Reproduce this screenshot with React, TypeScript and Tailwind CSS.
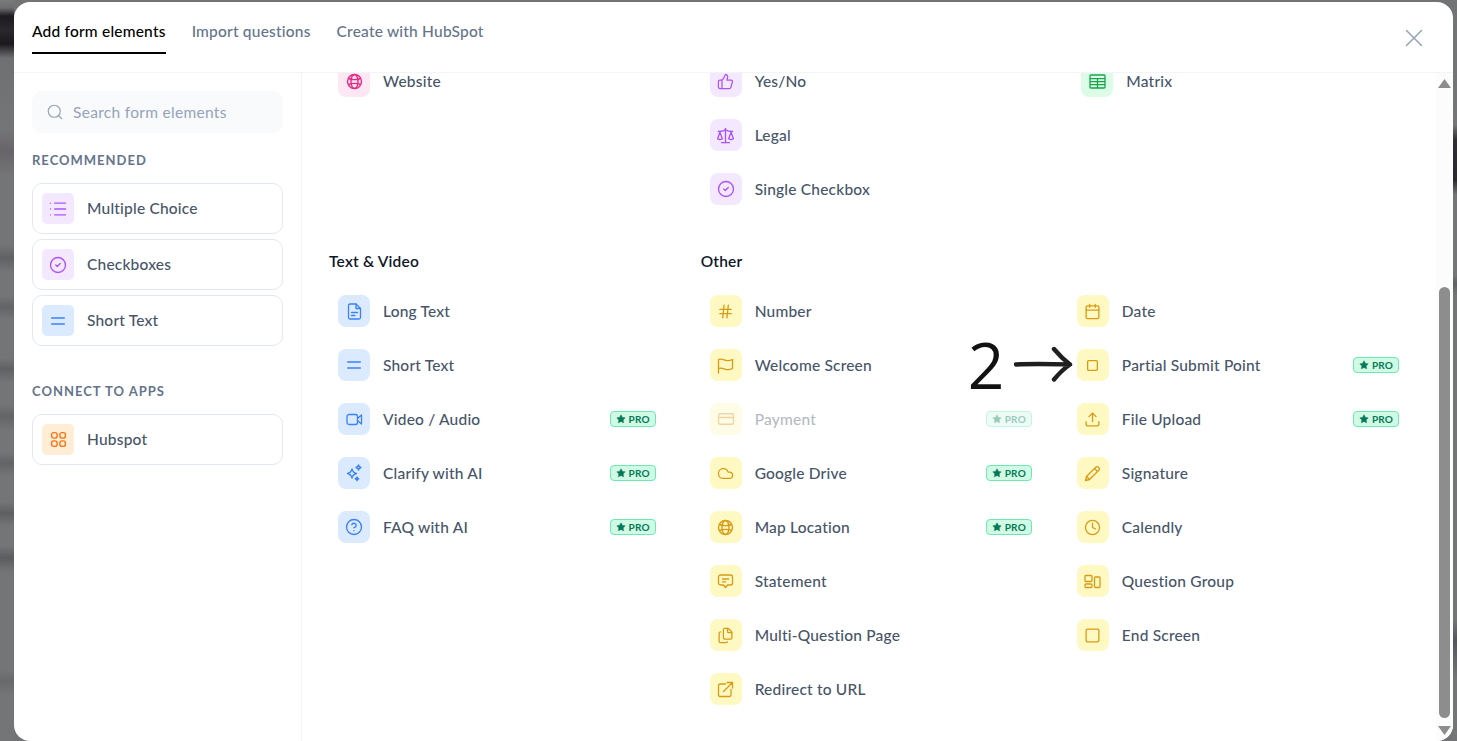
import { ReactNode } from "react";
import {
  Calendar,
  CircleCheck,
  CircleHelp,
  Clock,
  Cloud,
  CreditCard,
  Files,
  Hash,
  List,
  Scale,
  Search,
  Square,
  Star,
  ThumbsUp,
  Upload,
  X,
} from "lucide-react";

type Tone = "purple" | "blue" | "yellow" | "pink" | "green" | "orange";

const toneClass: Record<Tone, string> = {
  purple: "bg-[#f3e8ff] text-[#a855f7]",
  blue: "bg-[#dbeafe] text-[#3b82f6]",
  yellow: "bg-[#fef8c2] text-[#d99a14]",
  pink: "bg-[#fce7f3] text-[#e72a83]",
  green: "bg-[#dcfce7] text-[#16a34a]",
  orange: "bg-[#ffedd5] text-[#f97316]",
};

const HubspotIcon = () => (
  <svg width="17" height="17" viewBox="0 0 16 16" fill="none" stroke="currentColor" strokeWidth="1.3">
    <rect x="1.5" y="1.5" width="5.2" height="5.2" rx="2" />
    <rect x="9.3" y="1.5" width="5.2" height="5.2" rx="2" />
    <rect x="1.5" y="9.3" width="5.2" height="5.2" rx="2" />
    <rect x="9.3" y="9.3" width="5.2" height="5.2" rx="2" />
  </svg>
);

const MatrixIcon = () => (
  <svg width="17" height="15" viewBox="0 0 17 15" fill="none" stroke="currentColor" strokeWidth="1.3">
    <rect x="1" y="1" width="15" height="13" rx="1" />
    <path d="M1 4.600h15M1 7.600h15M1 10.600h15M8.500 4.600V14" />
  </svg>
);

const MessageIcon = () => (
  <svg width="17" height="17" viewBox="0 0 17 17" fill="none" stroke="currentColor" strokeWidth="1.3" strokeLinejoin="round">
    <path d="M3.500 2h10A2 2 0 0 1 15.500 4v6a2 2 0 0 1-2 2h-3l-2 2.500-2-2.500h-3a2 2 0 0 1-2-2V4a2 2 0 0 1 2-2Z" />
    <path d="M5 6h7M5 8.800h4" />
  </svg>
);

const GroupIcon = () => (
  <svg width="17" height="15" viewBox="0 0 17 15" fill="none" stroke="currentColor" strokeWidth="1.3">
    <rect x="1" y="1.500" width="7" height="6" rx="1" />
    <rect x="1" y="10" width="7" height="3.500" rx="1" />
    <rect x="10.500" y="3" width="5.500" height="10.500" rx="1" />
  </svg>
);

const WorldIcon = () => (
  <svg width="17" height="17" viewBox="0 0 17 17" fill="none" stroke="currentColor" strokeWidth="1.4">
    <circle cx="8.500" cy="8.500" r="7" />
    <ellipse cx="8.500" cy="8.500" rx="3.500" ry="7" />
    <path d="M2.300 5.500c3.500 1.300 8.900 1.300 12.400 0M2.300 11.500c3.500-1.300 8.900-1.300 12.400 0" />
  </svg>
);

const EqualIcon = () => (
  <svg width="14" height="8" viewBox="0 0 14 8" fill="none" stroke="currentColor" strokeWidth="1.4" strokeLinecap="round">
    <path d="M.7 1h12.600M.7 7h12.600" />
  </svg>
);

const SparkIcon = () => (
  <svg width="18" height="18" viewBox="0 0 18 18" fill="none" stroke="currentColor" strokeWidth="1.3" strokeLinejoin="round">
    <path d="M7 5c.6 2.600 1.900 3.900 4.500 4.500C8.900 10.100 7.600 11.400 7 14c-.6-2.600-1.900-3.900-4.500-4.500C5.100 8.900 6.400 7.600 7 5Z" />
    <path d="M13.500 1c.3 1.500 1 2.200 2.500 2.500-1.500.3-2.200 1-2.500 2.500-.3-1.500-1-2.200-2.500-2.500 1.500-.3 2.200-1 2.500-2.500Z" />
    <path d="M12 13c.2 1 .8 1.600 1.800 1.800-1 .2-1.600.8-1.800 1.800-.2-1-.8-1.600-1.800-1.800 1-.2 1.600-.8 1.800-1.800Z" fill="currentColor" />
  </svg>
);

const VideoIcon = () => (
  <svg width="17" height="13" viewBox="0 0 17 13" fill="none" stroke="currentColor" strokeWidth="1.3" strokeLinejoin="round">
    <rect x="1" y="1.500" width="10.500" height="10" rx="2" />
    <path d="M11.500 5.500 15.500 2v9l-4-3.500" />
  </svg>
);

const DocIcon = () => (
  <svg width="15" height="17" viewBox="0 0 15 17" fill="none" stroke="currentColor" strokeWidth="1.3" strokeLinejoin="round" strokeLinecap="round">
    <path d="M9 1H3a1.500 1.500 0 0 0-1.500 1.500v12A1.500 1.500 0 0 0 3 16h9a1.500 1.500 0 0 0 1.500-1.500V5.500L9 1Z" />
    <path d="M9 1v4.500h4.500M4.500 9.500h6M4.500 12.500h3.500" />
  </svg>
);

const FlagIcon = () => (
  <svg width="17" height="17" viewBox="0 0 17 17" fill="none" stroke="currentColor" strokeWidth="1.3" strokeLinejoin="round" strokeLinecap="round">
    <path d="M1.500 16V2.500c2.500-1.300 5 .2 7 .8 2 .6 4.500.4 7-.8v9c-2.500 1.200-5 1.400-7 .8-2-.6-4.500-2.100-7-.8" />
  </svg>
);

const RedirectIcon = () => (
  <svg width="17" height="17" viewBox="0 0 17 17" fill="none" stroke="currentColor" strokeWidth="1.3" strokeLinejoin="round" strokeLinecap="round">
    <path d="M8.500 3H3a1.500 1.500 0 0 0-1.500 1.500V14A1.500 1.500 0 0 0 3 15.500h9.500A1.500 1.500 0 0 0 14 14V8.500" />
    <path d="M6.500 10.500 15.500 1.500M10 1.500h5.500V7" />
  </svg>
);

const PencilIcon = () => (
  <svg width="17" height="17" viewBox="0 0 17 17" fill="none" stroke="currentColor" strokeWidth="1.3" strokeLinejoin="round">
    <path d="M1.500 15.500l1-4L12 2a1.400 1.400 0 0 1 2 0l1 1a1.400 1.400 0 0 1 0 2l-9.500 9.500-4 1Z" />
    <path d="M10.500 3.500l3 3M2.500 11.500l3 3" />
  </svg>
);

const ic = { size: 17, strokeWidth: 1.8 };

const IconBox = ({ tone, children }: { tone: Tone; children: ReactNode }) => (
  <span className={`flex h-[32px] w-[32px] shrink-0 items-center justify-center rounded-[8px] ${toneClass[tone]}`}>
    {children}
  </span>
);

const ProBadge = () => (
  <span className="ml-auto flex h-[16px] w-[46px] items-center justify-center gap-[3px] rounded-[4px] border border-[#6ee7b7] bg-[#d1fae5] text-[10px] font-bold tracking-[0.2px] text-[#047857]">
    <Star size={10} fill="currentColor" strokeWidth={1} />
    PRO
  </span>
);

type Item = { label: string; tone: Tone; icon: ReactNode; pro?: boolean; muted?: boolean; note?: boolean };

const Row = ({ label, tone, icon, pro, muted, note }: Item) => (
  <div className="relative">
    <div className={`flex h-[54px] items-center gap-[13px] px-[9px] ${muted ? "opacity-40" : ""}`}>
      <IconBox tone={tone}>{icon}</IconBox>
      <span className="text-[15.5px] font-medium leading-[16px] tracking-[0.2px] text-[#475569]">{label}</span>
      {pro && <ProBadge />}
    </div>
    {note && (
      <div className="absolute left-[-100px] top-0 flex h-[54px] items-center">
        <span className="font-['Open_Sans',sans-serif] text-[64px] font-medium leading-none text-[#111]">2</span>
        <svg className="absolute left-[46px] top-[8px]" width="60" height="36" viewBox="0 0 60 36" fill="none" stroke="#1f1f1f" strokeWidth="4.400" strokeLinecap="round" strokeLinejoin="round">
          <path d="M2 18.500c18-1 36-.5 54 0M40 3c5 6 10 11 16 15.500M56 18.500c-6 4-11 9-16 15" />
        </svg>
      </div>
    )}
  </div>
);

const SideCard = ({ label, tone, icon }: { label: string; tone: Tone; icon: ReactNode }) => (
  <div className="flex h-[51px] items-center gap-[13px] rounded-[10px] border border-[#e2e8f0] pl-[9px]">
    <span className={`flex h-[31px] w-[32px] items-center justify-center rounded-[5px] ${toneClass[tone]}`}>{icon}</span>
    <span className="text-[15.5px] font-medium tracking-[0.2px] text-[#475569]">{label}</span>
  </div>
);

const textVideo: Item[] = [
  { label: "Long Text", tone: "blue", icon: <DocIcon /> },
  { label: "Short Text", tone: "blue", icon: <EqualIcon /> },
  { label: "Video / Audio", tone: "blue", icon: <VideoIcon />, pro: true },
  { label: "Clarify with AI", tone: "blue", icon: <SparkIcon />, pro: true },
  { label: "FAQ with AI", tone: "blue", icon: <CircleHelp size={18} strokeWidth={1.8} />, pro: true },
];

const otherLeft: Item[] = [
  { label: "Number", tone: "yellow", icon: <Hash {...ic} /> },
  { label: "Welcome Screen", tone: "yellow", icon: <FlagIcon /> },
  { label: "Payment", tone: "yellow", icon: <CreditCard size={18} strokeWidth={1.8} />, pro: true, muted: true },
  { label: "Google Drive", tone: "yellow", icon: <Cloud {...ic} />, pro: true },
  { label: "Map Location", tone: "yellow", icon: <WorldIcon />, pro: true },
  { label: "Statement", tone: "yellow", icon: <MessageIcon /> },
  { label: "Multi-Question Page", tone: "yellow", icon: <Files {...ic} /> },
  { label: "Redirect to URL", tone: "yellow", icon: <RedirectIcon /> },
];

const otherRight: Item[] = [
  { label: "Date", tone: "yellow", icon: <Calendar {...ic} /> },
  { label: "Partial Submit Point", tone: "yellow", icon: <Square size={13} strokeWidth={2.4} />, pro: true, note: true },
  { label: "File Upload", tone: "yellow", icon: <Upload {...ic} />, pro: true },
  { label: "Signature", tone: "yellow", icon: <PencilIcon /> },
  { label: "Calendly", tone: "yellow", icon: <Clock {...ic} /> },
  { label: "Question Group", tone: "yellow", icon: <GroupIcon /> },
  { label: "End Screen", tone: "yellow", icon: <Square {...ic} /> },
];

export default function App() {
  return (
    <div className="flex h-screen overflow-hidden bg-[#727375] font-['Lato',sans-serif]">
      <div className="w-[14px] shrink-0 bg-[linear-gradient(to_bottom,#7a7b7d_0px,#6d6d70_8px,#1d1a20_16px,#2a282c_30px,#1b191e_44px,#6f7072_58px,#747576_130px,#68646a_151px,#747576_175px,#747576_245px,#5f6164_258px,#747576_272px,#747576_296px,#626467_307px,#747576_320px,#747576_358px,#5f6164_369px,#747576_382px,#747576_405px,#626467_416px,#747576_430px,#747576_452px,#626467_463px,#747576_476px,#747576_502px,#5d5f62_513px,#747576_526px,#747576_546px,#5a5c5f_558px,#747576_572px,#747576_670px,#67696b_681px,#747576_694px)]" />
      <div className="mt-[2px] flex h-[739px] min-w-0 flex-1 flex-col overflow-hidden rounded-[16px] bg-white">
        <header className="flex h-[71px] shrink-0 items-start justify-between border-b border-[#f1f5f9] pl-[18px] pr-[24px]">
          <nav className="flex gap-[26px] pt-[16px] text-[15.5px] tracking-[0.2px] text-[#64748b]">
            <span className="h-[36px] border-b-2 border-black font-medium leading-[26px] text-black">Add form elements</span>
            <span className="font-medium leading-[26px]">Import questions</span>
            <span className="font-medium leading-[26px]">Create with HubSpot</span>
          </nav>
          <X className="mt-[21px] text-[#94a3b8]" size={30} strokeWidth={1.2} />
        </header>

        <div className="flex min-h-0 flex-1">
          <aside className="w-[288px] shrink-0 border-r border-[#f1f5f9] p-[18px]">
            <div className="flex h-[42px] items-center gap-[9px] rounded-[10px] bg-[#f8fafc] pl-[14px] text-[15.5px] tracking-[0.3px] text-[#94a3b8]">
              <Search size={18} strokeWidth={1.5} />
              <span className="leading-[16px]">Search form elements</span>
            </div>
            <h3 className="mb-[13px] mt-[17px] text-[13px] font-bold leading-[20px] tracking-[1px] text-[#64748b]">RECOMMENDED</h3>
            <div className="flex flex-col gap-[5px]">
              <SideCard label="Multiple Choice" tone="purple" icon={<List size={20} strokeWidth={1.6} />} />
              <SideCard label="Checkboxes" tone="purple" icon={<CircleCheck size={18} strokeWidth={1.8} />} />
              <SideCard label="Short Text" tone="blue" icon={<EqualIcon />} />
            </div>
            <h3 className="mb-[13px] mt-[35px] text-[13px] font-bold leading-[20px] tracking-[1px] text-[#64748b]">CONNECT TO APPS</h3>
            <SideCard label="Hubspot" tone="orange" icon={<HubspotIcon />} />
          </aside>

          <main className="min-w-0 flex-1 overflow-hidden pl-[27px]">
            <div className="mt-[-19px] w-[1079px]">
              <div className="grid grid-cols-3 gap-x-[36px]">
                <div>
                  <Row label="Website" tone="pink" icon={<WorldIcon />} />
                </div>
                <div>
                  <Row label="Yes/No" tone="purple" icon={<ThumbsUp {...ic} />} />
                  <Row label="Legal" tone="purple" icon={<Scale size={19} strokeWidth={1.7} />} />
                  <Row label="Single Checkbox" tone="purple" icon={<CircleCheck size={18} strokeWidth={1.8} />} />
                </div>
                <div>
                  <Row label="Matrix" tone="green" icon={<MatrixIcon />} />
                </div>
              </div>

              <div className="mt-[33px] grid grid-cols-3 gap-x-[36px]">
                <section>
                  <h2 className="mb-[11px] text-[15.5px] font-semibold leading-[24px] tracking-[0.2px] text-[#0f172a]">Text &amp; Video</h2>
                  {textVideo.map((item) => (
                    <Row key={item.label} {...item} />
                  ))}
                </section>
                <section className="col-span-2">
                  <h2 className="mb-[11px] text-[15.5px] font-semibold leading-[24px] tracking-[0.2px] text-[#0f172a]">Other</h2>
                  <div className="grid grid-cols-2 gap-x-[27px]">
                    <div>
                      {otherLeft.map((item) => (
                        <Row key={item.label} {...item} />
                      ))}
                    </div>
                    <div>
                      {otherRight.map((item) => (
                        <Row key={item.label} {...item} />
                      ))}
                    </div>
                  </div>
                </section>
              </div>
            </div>
          </main>

          <div className="flex w-[17px] shrink-0 flex-col items-center bg-[#fcfcfc] pt-[6px]">
            <svg width="13" height="9" viewBox="0 0 13 9" fill="#8d8d8d"><path d="M6.500 0 13 9H0Z" /></svg>
            <div className="mt-[199px] h-[431px] w-[11px] shrink-0 rounded-[6px] bg-[#8d8d8d]" />
            <svg className="mt-[8px] shrink-0" width="13" height="9" viewBox="0 0 13 9" fill="#8d8d8d"><path d="M6.500 9 13 0H0Z" /></svg>
          </div>
        </div>
      </div>
      <div className="w-[4px] shrink-0 bg-[linear-gradient(to_bottom,#727375_0px,#747576_125px,#302e33_140px,#2b292e_180px,#747576_195px,#747576_275px,#606164_284px,#747576_295px,#747576_620px,#55565a_640px,#747576_680px)]" />
    </div>
  );
}
